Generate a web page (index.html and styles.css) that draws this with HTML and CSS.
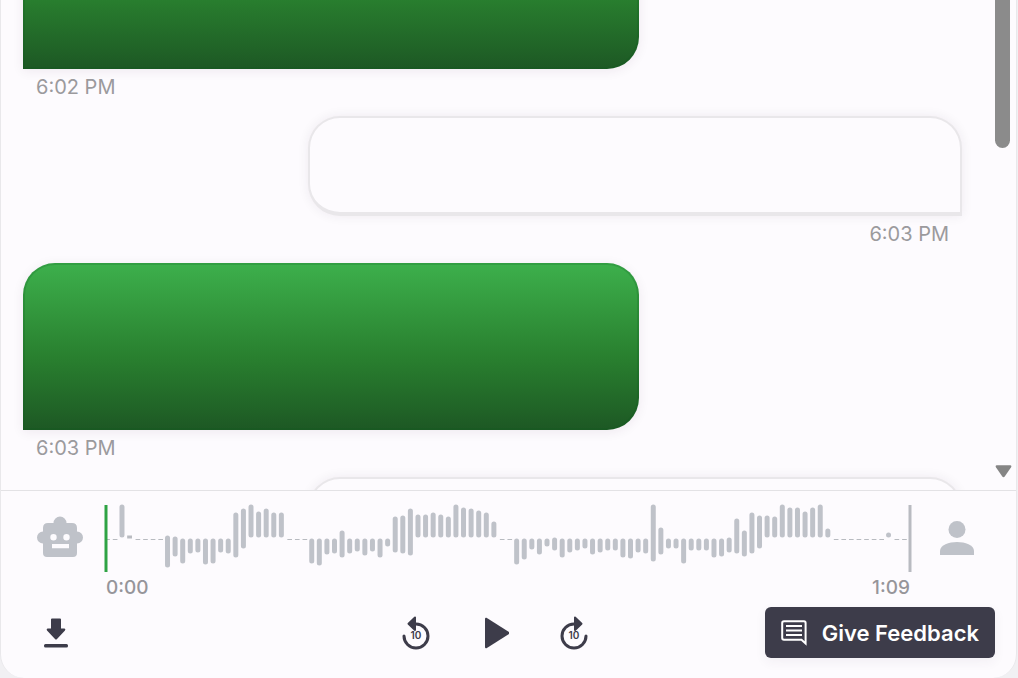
FILE: index.html
```html
<!DOCTYPE html>
<html lang="en">
<head>
<meta charset="utf-8">
<meta name="viewport" content="width=device-width, initial-scale=1">
<title>Conversation</title>
<link rel="stylesheet" href="styles.css">
</head>
<body>
<div class="card">
  <main class="chat">
    <div class="messages">
      <article class="message agent first"><div class="bubble"></div><time>6:02 PM</time></article>
      <article class="message user"><div class="bubble"></div><time>6:03 PM</time></article>
      <article class="message agent"><div class="bubble"></div><time>6:03 PM</time></article>
      <article class="message user"><div class="bubble"></div></article>
    </div>
    <div class="scrollbar" aria-hidden="true">
      <div class="thumb"></div>
      <svg class="arrow" viewBox="0 0 18 14"><path d="M2 1H16Q18 1 17 3L10.500 12.500Q9 14.500 7.500 12.500L1 3Q0 1 2 1Z"/></svg>
    </div>
  </main>
  <footer class="player">
    <div class="track">
      <svg class="robot" viewBox="0 0 46 42" aria-hidden="true">
        <path fill-rule="evenodd" d="M16.500 6A6.500 6.500 0 0 1 29.500 6H35Q40 6 40 11V14.500A6 6 0 0 1 40 26.500V36Q40 40 36 40H10Q6 40 6 36V26.500A6 6 0 0 1 6 14.500V11Q6 6 11 6ZM16.500 17A3.200 3.200 0 1 0 16.500 23.400A3.200 3.200 0 1 0 16.500 17ZM29.500 17A3.200 3.200 0 1 0 29.500 23.400A3.200 3.200 0 1 0 29.500 17ZM15 27V31.300H32V27Z"/>
      </svg>
      <div class="timeline">
        <svg class="wave" id="wave" role="img" aria-label="Audio waveform"></svg>
        <div class="times"><span>0:00</span><span>1:09</span></div>
      </div>
      <svg class="person" viewBox="0 0 34 34" aria-hidden="true"><circle cx="17" cy="8.500" r="8.500"/><path d="M0 34V30C0 24 9 21 17 21S34 24 34 30V34Z"/></svg>
    </div>
    <div class="controls">
      <div class="side">
        <button class="icon" type="button" aria-label="Download">
          <svg class="download" viewBox="0 0 24 30"><path d="M8 .5H16Q17 .5 17 1.500V10.500H20.500Q22 11 21 12.500L13 21Q12 22 11 21L3 12.500Q2 11 3.500 10.500H7V1.500Q7 .5 8 .5Z"/><rect x="0" y="26" width="24" height="3.500" rx="1.500"/></svg>
        </button>
      </div>
      <div class="transport">
        <button class="icon" type="button" aria-label="Back 10 seconds">
          <svg class="skip" viewBox="0 0 28 34"><path class="arc" d="M2 20A12 12 0 1 0 14 8H12"/><path class="head" d="M13 1.500V14L6.500 7.700Z"/><text x="14" y="23">10</text></svg>
        </button>
        <button class="icon" type="button" aria-label="Play">
          <svg class="play" viewBox="-3 -1 28 34"><path d="M2.500 .8L25 15Q26 16 25 17L2.500 31.200Q1 31.700 1 30V2Q1 .3 2.500 .8Z"/></svg>
        </button>
        <button class="icon" type="button" aria-label="Forward 10 seconds">
          <svg class="skip" viewBox="0 0 28 34"><path class="arc" d="M26 20A12 12 0 1 1 14 8H16"/><path class="head" d="M15 1.500V14L21.500 7.700Z"/><text x="14" y="23">10</text></svg>
        </button>
      </div>
      <div class="side end">
        <button class="feedback" type="button">
          <svg class="comment" viewBox="0 0 26 26" aria-hidden="true"><path d="M24.600 23.500V3Q24.600 1.200 23 1.200H3Q1.200 1.200 1.200 3V18Q1.200 19.800 3 19.800H20.500Z"/><path d="M5 6H21M5 10.500H21M5 15H21"/></svg>
          Give Feedback
        </button>
      </div>
    </div>
  </footer>
</div>
<script src="script.js"></script>
</body>
</html>
```
FILE: styles.css
```css
* { box-sizing: border-box; }
body {
  margin: 0;
  background: #f1f0f3;
  font-family: Inter, "Liberation Sans", sans-serif;
}
.card {
  height: 100vh;
  display: flex;
  flex-direction: column;
  margin-right: 1px;
  border: solid #e9e8eb;
  border-width: 0 1px;
  border-radius: 0 0 24px 24px;
  background: #fdfbfe;
  overflow: hidden;
}
.chat {
  flex: 1;
  min-height: 0;
  display: flex;
  overflow: hidden;
}
.messages { flex: 1; padding: 0 33px 0 22px; }
.message {
  display: flex;
  flex-direction: column;
  align-items: flex-start;
  margin-bottom: 17px;
}
.message.user { align-items: flex-end; }
.message.first { margin-top: -98px; }
.bubble {
  width: 65.600%;
  height: 167px;
  border: 2px solid rgba(12, 90, 30, .2);
  border-radius: 32px 32px 32px 0;
  background: linear-gradient(#3db04c, #29802f 56%, #1d5824) border-box;
  box-shadow: 0 2px 12px rgba(60, 20, 70, .08);
}
.user .bubble {
  width: 69.700%;
  height: 100px;
  border: 2px solid #e9e7ea;
  border-bottom-width: 4px;
  border-radius: 32px 32px 0 32px;
  background: #fdfbfe;
  box-shadow: 0 0 12px rgba(40, 20, 50, .07);
}
time {
  margin: 6px 13px 0;
  color: #9b9a9d;
  font-size: 20px;
  line-height: 24px;
}
.scrollbar {
  width: 21px;
  display: flex;
  flex-direction: column;
  justify-content: space-between;
  padding-bottom: 12px;
}
.thumb {
  width: 15px;
  height: 148px;
  border-radius: 0 0 8px 8px;
  background: #8b8b8b;
}
.arrow { width: 17px; height: 14px; fill: #858585; }
.player {
  height: 188px;
  padding: 13px 21px 20px 36px;
  border-top: 1px solid #e3e2e5;
}
.track { display: flex; align-items: flex-start; }
.robot { width: 46px; height: 42px; margin-top: 13px; fill: #bfc2c9; overflow: visible; }
.timeline { flex: 1; margin: 0 30px 0 23px; }
.wave { display: block; width: 100%; height: 68px; overflow: visible; }
.person { width: 34px; height: 34px; margin: 17px 21px 0 0; fill: #bfc2c9; }
.bar { stroke: #bfc2c9; stroke-width: 5px; stroke-linecap: round; }
.dash { stroke: #b8bbc0; stroke-width: 1px; }
.edge { stroke: #b9bbc1; stroke-width: 3px; }
.edge.current { stroke: #2fa344; }
.times {
  display: flex;
  justify-content: space-between;
  margin-top: 4px;
  color: #96959a;
  font-size: 19px;
  font-weight: 500;
  line-height: 24px;
}
.controls { display: flex; align-items: center; margin-top: 7px; }
.side { flex: 1; display: flex; padding-left: 3px; }
.end { justify-content: flex-end; padding: 0; }
.transport { display: flex; align-items: center; gap: 39px; margin-right: 46px; }
button { border: 0; font: inherit; cursor: pointer; }
.icon {
  width: 40px;
  height: 40px;
  display: grid;
  place-items: center;
  padding: 0;
  background: none;
  fill: #3d3c4a;
}
.side .icon { width: 32px; }
.download { width: 24px; height: 30px; }
.play { width: 28px; height: 34px; }
.skip { width: 28px; height: 34px; }
.arc { fill: none; stroke: #3d3c4a; stroke-width: 3px; stroke-linecap: round; }
.head { stroke: #3d3c4a; stroke-width: 2px; stroke-linejoin: round; }
.skip text { font-size: 10px; font-weight: 600; text-anchor: middle; }
.feedback {
  height: 51px;
  display: flex;
  align-items: center;
  gap: 15px;
  padding: 0 16px;
  border-radius: 6px;
  background: #3d3c4a;
  box-shadow: 0 4px 12px rgba(60, 50, 80, .06);
  color: #fff;
  font-size: 22px;
  font-weight: 600;
  white-space: nowrap;
}
.comment { width: 26px; height: 26px; fill: none; stroke: #fff; stroke-width: 2px; }
```
FILE: script.js
```js
// Each sample is [height above the centre line, depth below it]; 0 is silence.
const samples = [
  0, 0, [34, 0], [3, 0], 0, 0, 0, 0,
  [3, 30], [2, 19], [0, 26], [0, 16], [0, 15], [0, 27], [0, 26], [0, 15], [0, 16],
  [26, 20], [30, 11], [34, 0], [27, 0], [30, 0], [26, 0], [26, 0], 0, 0, 0,
  [0, 26], [0, 28], [0, 17], [0, 16], [8, 20], [0, 16], [0, 14], [0, 18], [0, 14],
  [0, 20], [0, 9], [22, 15], [23, 16], [30, 18], [24, 0], [24, 0], [26, 0], [24, 0],
  [22, 0], [34, 0], [31, 0], [30, 0], [28, 0], [26, 0], [17, 0], 0, 0,
  [0, 27], [0, 22], [0, 12], [0, 17], [0, 9], [1, 13], [0, 20], [0, 15], [0, 13],
  [0, 11], [0, 17], [0, 15], [0, 13], [0, 13], [0, 20], [0, 21], [0, 15], [0, 16],
  [34, 24], [11, 17], [0, 11], [0, 11], [0, 26], [0, 13], [0, 13], [0, 13],
  [0, 20], [0, 19], [1, 15], [20, 16], [8, 19], [26, 16], [23, 11], [23, 0], [22, 0],
  [34, 0], [31, 0], [31, 0], [27, 0], [31, 0], [34, 0], [10, 0],
  0, 0, 0, 0, 0, 0, 0, [6, 0], 0, 0
];
const wave = document.getElementById('wave');
const centre = 34;

function line(name, x1, y1, x2, y2) {
  const el = document.createElementNS('http://www.w3.org/2000/svg', 'line');
  el.setAttribute('class', name);
  Object.entries({ x1, y1, x2, y2 }).forEach(([key, value]) => el.setAttribute(key, value));
  wave.append(el);
}

samples.forEach((sample, i) => {
  const x = 0.1 + i * 0.944;
  if (!sample) {
    line('dash', x - 0.2 + '%', centre + 1.5, x + 0.38 + '%', centre + 1.5);
  } else if (sample[0] + sample[1] < 5) {
    line('edge', x - 0.3 + '%', centre - 1, x + 0.3 + '%', centre - 1);
  } else {
    line('bar', x + '%', centre - sample[0] + 3, x + '%', centre + sample[1] - 3);
  }
});
line('edge current', '0%', 1, '0%', 68);
line('edge', '100%', 1, '100%', 68);
```
